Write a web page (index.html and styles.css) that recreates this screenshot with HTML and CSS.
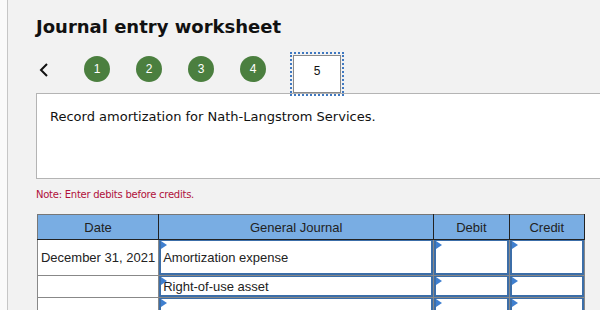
FILE: index.html
```html
<!DOCTYPE html>
<html lang="en">
<head>
  <meta charset="UTF-8" />
  <title>Journal entry worksheet</title>
  <link rel="stylesheet" href="styles.css">
</head>
<body>
  <div class="page">
    <h1 class="title">Journal entry worksheet</h1>

    <div class="steps">
      <span class="back">
        <svg width="12" height="14" viewBox="0 0 12 14"><path d="M9 1 L3 7 L9 13" fill="none" stroke="#111" stroke-width="2"/></svg>
      </span>
      <span class="step done">1</span>
      <span class="step done">2</span>
      <span class="step done">3</span>
      <span class="step done">4</span>
      <span class="step current"><span>5</span></span>
    </div>

    <div class="prompt">Record amortization for Nath-Langstrom Services.</div>

    <div class="note">Note: Enter debits before credits.</div>

    <table class="journal">
      <thead>
        <tr>
          <th class="c-date">Date</th>
          <th class="c-acct">General Journal</th>
          <th class="c-num">Debit</th>
          <th class="c-num">Credit</th>
        </tr>
      </thead>
      <tbody>
        <tr class="tall">
          <td class="date">December 31, 2021</td>
          <td><div class="field">Amortization expense</div></td>
          <td><div class="field"></div></td>
          <td><div class="field"></div></td>
        </tr>
        <tr>
          <td class="date"></td>
          <td><div class="field">Right-of-use asset</div></td>
          <td><div class="field"></div></td>
          <td><div class="field"></div></td>
        </tr>
        <tr>
          <td class="date"></td>
          <td><div class="field"></div></td>
          <td><div class="field"></div></td>
          <td><div class="field"></div></td>
        </tr>
      </tbody>
    </table>
  </div>
</body>
</html>
```

FILE: styles.css
```css
body {
  margin: 0;
  background: #fafafa;
  overflow: hidden;
}

.page {
  margin-left: 7px;
  border-left: 1px solid #c6c6c6;
  background: #f2f2f2;
  height: 310px;
  padding-left: 28px;
  overflow: hidden;
  font-family: "DejaVu Sans", Verdana, sans-serif;
}

.title {
  margin: 0;
  padding-top: 16px;
  font-size: 18px;
  font-weight: bold;
  color: #111;
  line-height: 22px;
}

.steps {
  display: flex;
  align-items: flex-start;
  margin-top: 14px;
  height: 44px;
  margin-bottom: -3px;
  position: relative;
  z-index: 1;
}

.back {
  display: flex;
  width: 48px;
  padding-left: 2px;
  margin-top: 11px;
  box-sizing: border-box;
}

.step {
  width: 26px;
  height: 26px;
  border-radius: 50%;
  margin-right: 26px;
  margin-top: 4px;
  display: flex;
  align-items: center;
  justify-content: center;
  font-family: "Liberation Sans", Arial, sans-serif;
  font-size: 12px;
}

.step.done {
  background: #4b7f3f;
  color: #fff;
}

.step.current {
  width: 54px;
  height: 44px;
  border-radius: 0;
  margin: 0 0 0 -2px;
  border: 2px dotted #3f78c0;
  box-sizing: border-box;
  padding: 1px;
}

.step.current span {
  flex: 1;
  align-self: stretch;
  display: flex;
  align-items: center;
  justify-content: center;
  background: #fff;
  border: 1px solid #8a8a8a;
  color: #111;
  padding-bottom: 6px;
}

.prompt {
  background: #fff;
  border: 1px solid #b4b4b4;
  border-right: none;
  height: 86px;
  box-sizing: border-box;
  padding: 15px 13px;
  font-size: 13px;
  color: #111;
}

.note {
  margin-top: 10px;
  font-size: 10px;
  letter-spacing: -0.25px;
  color: #b0103a;
}

.journal {
  margin-top: 14px;
  margin-left: 1px;
  border-collapse: collapse;
  width: 548px;
  font-family: "Liberation Sans", Arial, sans-serif;
  font-size: 13px;
  color: #222;
}

.journal th {
  background: #79ade3;
  font-weight: normal;
  height: 24px;
  border: 1px solid #222;
  border-top-color: #777;
  padding: 0;
}

.journal th:first-child {
  border-left-color: #777;
}

.c-date { width: 121px; }
.c-acct { width: 277px; }
.c-num { width: 75px; }

.journal td {
  border: 1px solid #888;
  padding: 0;
  height: 21px;
  background: #fff;
}

.journal tr.tall td {
  height: 35px;
}

.journal td.date {
  text-align: right;
  padding-right: 3px;
}

.field {
  position: relative;
  box-sizing: border-box;
  height: 21px;
  border: 2px solid #3c6ea8;
  border-top-width: 1px;
  padding-left: 2px;
  display: flex;
  align-items: center;
}

.tall .field {
  height: 35px;
}

.field::before {
  content: '';
  position: absolute;
  top: 0;
  left: 0;
  border-left: 6px solid #3f7fcf;
  border-top: 4px solid transparent;
  border-bottom: 4px solid transparent;
}
```
